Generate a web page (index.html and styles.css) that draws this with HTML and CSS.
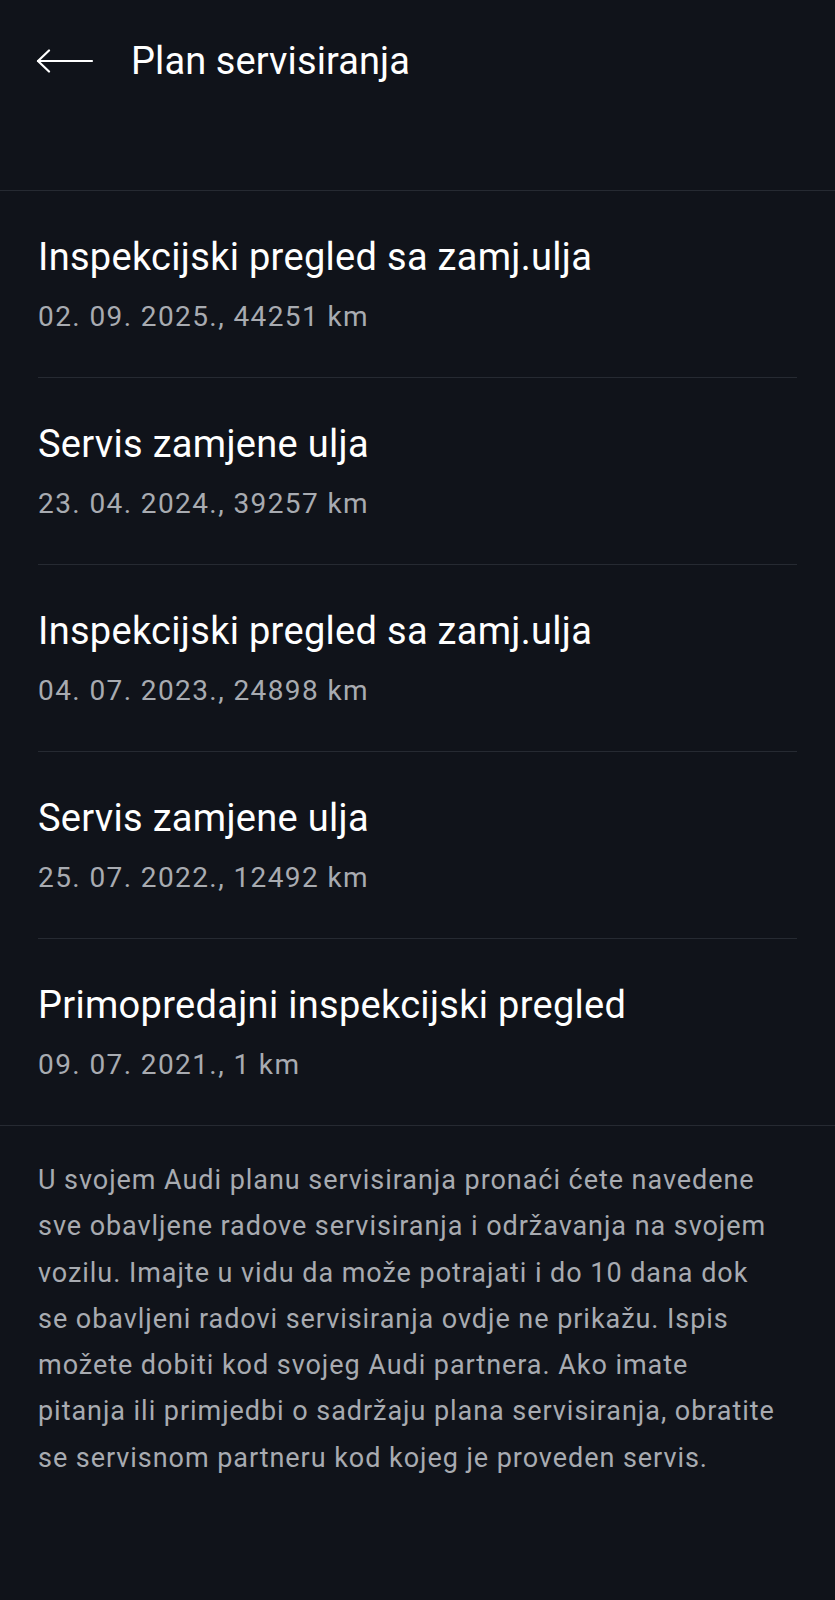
FILE: index.html
```html
<!DOCTYPE html>
<html lang="hr">
<head>
    <meta charset="UTF-8">
    <meta name="viewport" content="width=device-width, initial-scale=1.0">
    <title>Plan servisiranja</title>
    <link rel="stylesheet" href="styles.css">
</head>
<body>
    <header class="app-bar">
        <div class="bar-row">
            <a class="back" href="#" aria-label="Natrag">
                <svg width="58" height="24" viewBox="0 0 58 24" fill="none" stroke="#ffffff" stroke-width="2.2" stroke-linecap="round" stroke-linejoin="round">
                    <path d="M2 12 H56"/>
                    <path d="M13 1.5 L2 12 L13 22.5"/>
                </svg>
            </a>
            <h1 class="title">Plan servisiranja</h1>
        </div>
    </header>
    <main>
        <ul class="service-list">
            <li class="service-item">
                <div class="service-name">Inspekcijski pregled sa zamj.ulja</div>
                <div class="service-meta">02. 09. 2025., 44251 km</div>
            </li>
            <li class="service-item">
                <div class="service-name">Servis zamjene ulja</div>
                <div class="service-meta">23. 04. 2024., 39257 km</div>
            </li>
            <li class="service-item">
                <div class="service-name">Inspekcijski pregled sa zamj.ulja</div>
                <div class="service-meta">04. 07. 2023., 24898 km</div>
            </li>
            <li class="service-item">
                <div class="service-name">Servis zamjene ulja</div>
                <div class="service-meta">25. 07. 2022., 12492 km</div>
            </li>
            <li class="service-item">
                <div class="service-name">Primopredajni inspekcijski pregled</div>
                <div class="service-meta">09. 07. 2021., 1 km</div>
            </li>
        </ul>
        <p class="note">U svojem Audi planu servisiranja pronaći ćete navedene<br>
            sve obavljene radove servisiranja i održavanja na svojem<br>
            vozilu. Imajte u vidu da može potrajati i do 10 dana dok<br>
            se obavljeni radovi servisiranja ovdje ne prikažu. Ispis<br>
            možete dobiti kod svojeg Audi partnera. Ako imate<br>
            pitanja ili primjedbi o sadržaju plana servisiranja, obratite<br>
            se servisnom partneru kod kojeg je proveden servis.</p>
    </main>
</body>
</html>
```

FILE: styles.css
```css
:root {
    --background-color: #10131a;
    --divider-color: #262a32;
    --text-color: #ffffff;
    --muted-color: #a8abb1;
}

body {
    font-family: Roboto, "Liberation Sans", sans-serif;
    background-color: var(--background-color);
    color: var(--text-color);
    margin: 0;
    padding: 0;
}

.app-bar {
    height: 190px;
    border-bottom: 1px solid var(--divider-color);
}

.bar-row {
    display: flex;
    align-items: center;
    height: 121px;
    padding-left: 36px;
}

.back {
    display: flex;
    width: 95px;
}

.title {
    margin: 0;
    font-size: 38px;
    font-weight: 400;
    letter-spacing: 0.1px;
}

.service-list {
    list-style: none;
    margin: 0;
    padding: 0;
    border-bottom: 1px solid var(--divider-color);
}

.service-item {
    margin: 0 38px;
    padding: 43px 0 43px;
    border-bottom: 1px solid var(--divider-color);
}

.service-item:last-child {
    border-bottom: none;
}

.service-name {
    font-size: 38px;
    line-height: 46px;
    letter-spacing: 0.3px;
}

.service-meta {
    margin-top: 20px;
    font-size: 28px;
    line-height: 34px;
    letter-spacing: 1.4px;
    color: var(--muted-color);
}

.note {
    margin: 31px 30px 28px 38px;
    font-size: 27px;
    line-height: 46.3px;
    letter-spacing: 0.95px;
    color: var(--muted-color);
}
```
